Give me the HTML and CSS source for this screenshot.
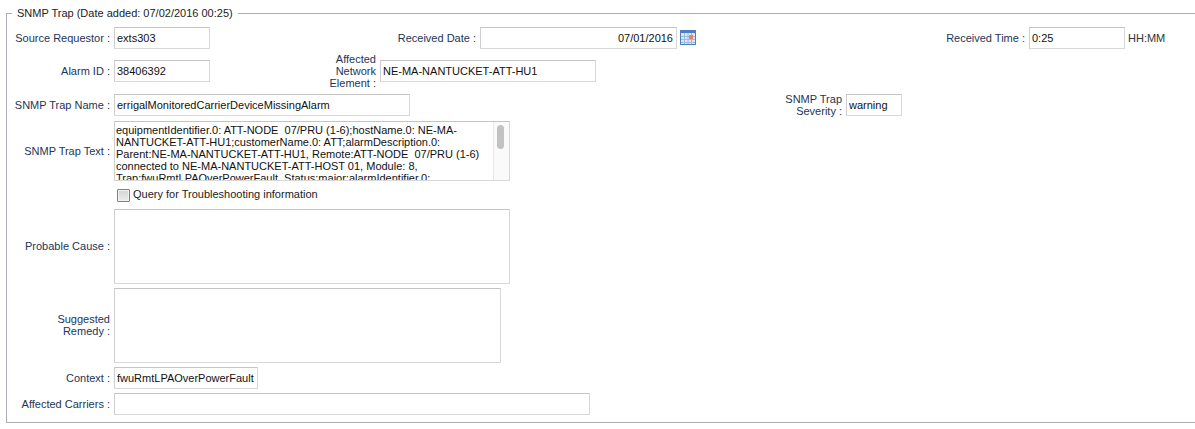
FILE: index.html
```html
<!DOCTYPE html>
<html>
<head>
    <title>SNMP Trap</title>
    <link rel="stylesheet" href="styles.css">
</head>
<body>
    <fieldset class="trap">
        <legend>SNMP Trap (Date added: 07/02/2016 00:25)</legend>

        <div class="row row-1">
            <label class="lbl lbl-main">Source Requestor :</label>
            <input class="box w-96" type="text" value="exts303">
            <label class="lbl lbl-date">Received Date :</label>
            <input class="box w-197 right" type="text" value="07/01/2016">
            <svg class="cal" width="16" height="15" viewBox="0 0 16 15">
                <rect x="0" y="0" width="16" height="15" fill="#4d7fbe"/>
                <rect x="1" y="3" width="14" height="11" fill="#dbe7f6"/>
                <path d="M4.5 3v11M8 3v11M11.5 3v11M1 6.5h14M1 9.5h14M1 12.5h14" stroke="#9dbbe0" stroke-width="1" fill="none"/>
                <rect x="9" y="5" width="4" height="4" fill="#e9806a"/>
            </svg>
            <label class="lbl lbl-time">Received Time :</label>
            <input class="box w-96" type="text" value="0:25">
            <span class="hint">HH:MM</span>
        </div>

        <div class="row row-2">
            <label class="lbl lbl-main">Alarm ID :</label>
            <input class="box w-96" type="text" value="38406392">
            <label class="lbl lbl-element">Affected Network Element :</label>
            <input class="box w-216" type="text" value="NE-MA-NANTUCKET-ATT-HU1">
        </div>

        <div class="row row-3">
            <label class="lbl lbl-main">SNMP Trap Name :</label>
            <input class="box w-296" type="text" value="errigalMonitoredCarrierDeviceMissingAlarm">
            <label class="lbl lbl-severity">SNMP Trap Severity :</label>
            <input class="box w-56" type="text" value="warning">
        </div>

        <div class="row row-text">
            <label class="lbl lbl-main">SNMP Trap Text :</label>
            <div class="box trap-text">
                <div class="trap-lines">equipmentIdentifier.0: ATT-NODE&nbsp; 07/PRU (1-6);hostName.0: NE-MA-NANTUCKET-ATT-HU1;customerName.0: ATT;alarmDescription.0: Parent:NE-MA-NANTUCKET-ATT-HU1, Remote:ATT-NODE&nbsp; 07/PRU (1-6) connected to NE-MA-NANTUCKET-ATT-HOST 01, Module: 8, Trap:fwuRmtLPAOverPowerFault, Status:major;alarmIdentifier.0:</div>
                <div class="scroll"><div class="thumb"></div></div>
            </div>
        </div>

        <div class="row row-check">
            <span class="check"></span>
            <span class="check-text">Query for Troubleshooting information</span>
        </div>

        <div class="row row-area row-cause">
            <label class="lbl lbl-main">Probable Cause :</label>
            <div class="box area w-396"></div>
        </div>

        <div class="row row-area row-remedy">
            <label class="lbl lbl-main lbl-narrow">Suggested Remedy :</label>
            <div class="box area w-387"></div>
        </div>

        <div class="row row-context">
            <label class="lbl lbl-main">Context :</label>
            <input class="box w-144" type="text" value="fwuRmtLPAOverPowerFault">
        </div>

        <div class="row row-carriers">
            <label class="lbl lbl-main">Affected Carriers :</label>
            <input class="box w-476" type="text" value="">
        </div>
    </fieldset>
</body>
</html>
```

FILE: styles.css
```css
html, body { margin: 0; padding: 0; overflow: hidden; }
body { font-family: "Liberation Sans", Arial, sans-serif; font-size: 11px; color: #111; background: #fff; height: 429px; }

.trap { box-sizing: border-box; width: 1200px; height: 416px; margin: 7px 0 0 6px; padding: 7px 0 0 0; border: 1px solid #a9adb2; }
.trap legend { margin-left: 5px; padding: 0 5px; font-size: 11px; color: #222; line-height: 13px; }

.row { display: flex; align-items: center; height: 22px; }
.row-area { height: 75px; }
.row-area .lbl { margin-top: -2px; }
.row-2 { margin-top: 11px; }
.row-3 { margin-top: 12px; }
.row-text { margin-top: 5px; height: 60px; }
.row-check { margin-top: 7px; height: 14px; padding-left: 110px; }
.row-cause { margin-top: 7px; }
.row-remedy { margin-top: 4px; }
.row-context { margin-top: 4px; }
.row-carriers { margin-top: 4px; }

.lbl { color: #1d3557; text-align: right; line-height: 12px; box-sizing: border-box; margin-right: 4px; flex: none; }
.lbl-main { width: 103px; }
.lbl-narrow { padding-left: 40px; }
.lbl-date { width: 266px; }
.lbl-time { width: 329px; }
.lbl-element { width: 166px; padding-left: 96px; }
.lbl-severity { width: 432px; padding-left: 340px; }

.box { box-sizing: border-box; height: 22px; margin: 0; padding: 0 2px; border: 1px solid #d8d8d8; border-top-color: #c4c4c4; border-left-color: #cfcfcf; background: #fff; font-family: inherit; font-size: 11px; color: #111; flex: none; outline: none; }
.right { text-align: right; padding-right: 3px; }
.w-56 { width: 56px; }
.w-96 { width: 96px; }
.w-144 { width: 144px; }
.w-197 { width: 197px; }
.w-216 { width: 216px; }
.w-296 { width: 296px; }
.w-387 { width: 387px; }
.w-396 { width: 396px; }
.w-476 { width: 476px; }

.cal { margin-left: 3px; margin-top: -1px; flex: none; }
.hint { margin-left: 3px; color: #333; }

.area { height: 75px; }

.trap-text { width: 396px; height: 60px; padding: 0; display: flex; overflow: hidden; }
.trap-lines { flex: 1; padding: 2px 0 0 1px; line-height: 12px; height: 56px; overflow: hidden; }
.scroll { width: 16px; flex: none; border-left: 1px solid #e8e8e8; background: #fafafa; box-sizing: border-box; }
.thumb { width: 7px; height: 24px; margin: 3px 0 0 3px; border-radius: 4px; background: #c2c2c2; }

.check { box-sizing: border-box; width: 13px; height: 13px; border: 1px solid #808080; border-radius: 1px; background: linear-gradient(#d4d4d4, #ececec); box-shadow: inset 0 0 0 1px #f2f2f2; flex: none; }
.check-text { margin-left: 3px; margin-bottom: 2px; color: #222; }
```
